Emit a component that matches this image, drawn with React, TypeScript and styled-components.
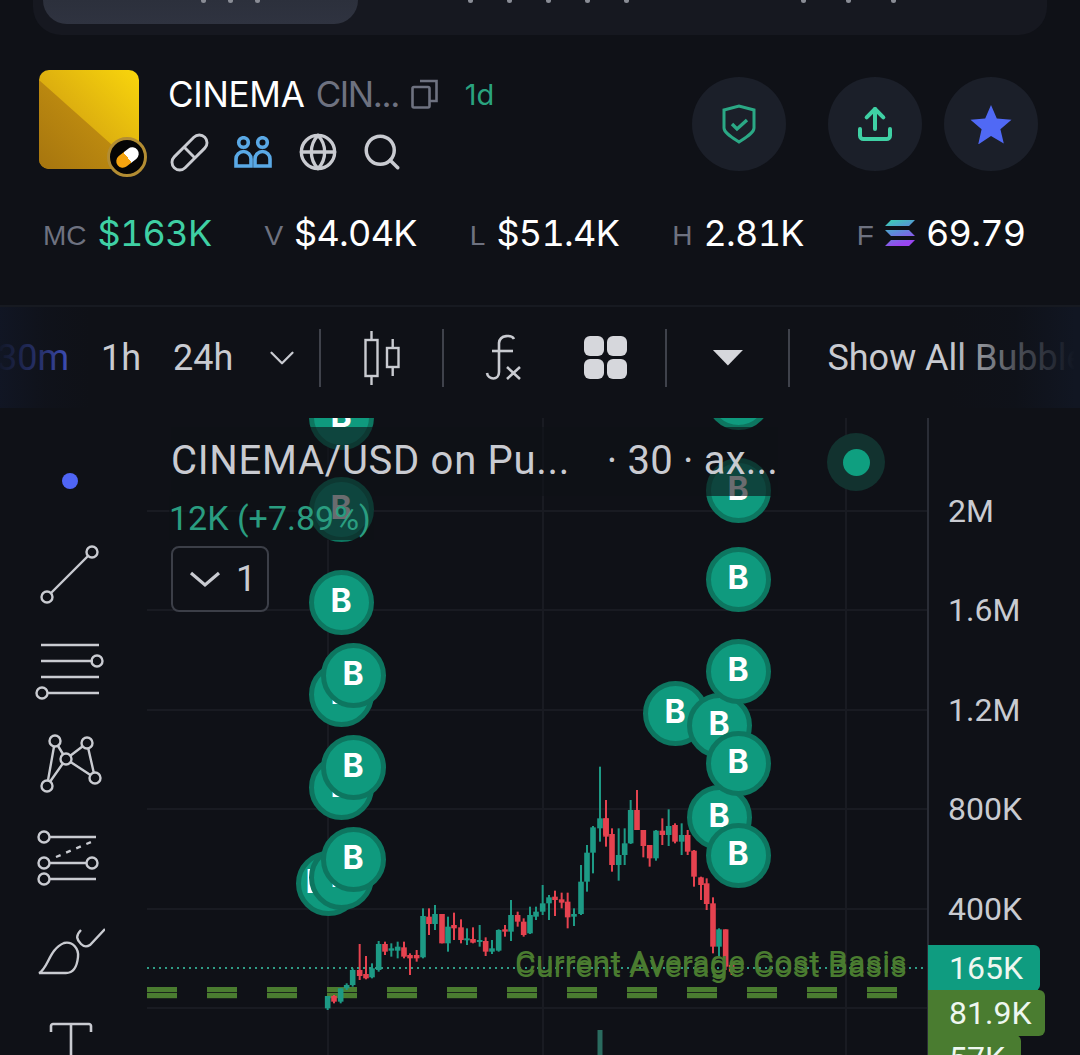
import React from 'react'
import styled, {createGlobalStyle} from 'styled-components'
import {ChevronDown, Globe, Search, Upload} from 'lucide-react'

const GlobalStyle = createGlobalStyle`
  html, body {
    margin: 0;
    padding: 0;
    background: #0f1117;
  }
  * {
    box-sizing: border-box;
  }
`

const TEAL = '#1d9a85'
const RED = '#e5424f'
const OLIVE = '#4a7c30'

// color, x, body top, body bottom, wick top, wick bottom (page pixels)
type Candle = [string, number, number, number, number, number]

const ZOOM_A: Candle[] = [
  ['g', 113, 768, 805, 768, 810], ['r', 132, 768, 785, 765, 790], ['g', 152, 745, 785, 745, 790],
  ['g', 170, 735, 745, 730, 750], ['g', 188, 690, 735, 685, 740], ['r', 209, 690, 708, 612, 720],
  ['r', 228, 702, 715, 648, 718], ['g', 246, 685, 712, 670, 715], ['g', 266, 612, 690, 603, 695],
  ['r', 285, 612, 635, 605, 645], ['g', 304, 625, 632, 610, 650], ['g', 323, 620, 632, 605, 655],
  ['r', 342, 622, 650, 605, 655], ['r', 360, 645, 655, 640, 705], ['r', 380, 645, 655, 630, 665],
  ['g', 399, 528, 652, 505, 655], ['r', 417, 530, 552, 505, 585], ['g', 435, 522, 552, 495, 570],
  ['r', 456, 522, 610, 522, 610], ['g', 474, 560, 610, 530, 635], ['r', 492, 555, 565, 518, 600],
  ['r', 513, 562, 600, 538, 610], ['g', 531, 595, 600, 565, 615], ['r', 549, 597, 608, 562, 610],
  ['g', 569, 600, 605, 555, 620], ['r', 587, 603, 635, 592, 648], ['g', 606, 625, 635, 600, 642],
  ['g', 626, 570, 632, 568, 635], ['r', 645, 568, 575, 555, 590], ['g', 663, 525, 575, 480, 603],
  ['r', 683, 525, 545, 515, 560], ['r', 701, 545, 585, 535, 590], ['g', 720, 525, 580, 500, 582],
  ['g', 738, 515, 530, 500, 540], ['g', 758, 490, 515, 435, 525], ['g', 777, 472, 490, 465, 540],
  ['r', 795, 470, 480, 452, 528], ['r', 815, 478, 488, 458, 505], ['r', 833, 485, 532, 458, 565],
  ['g', 852, 522, 530, 505, 558], ['g', 873, 425, 522, 375, 525], ['g', 891, 338, 425, 315, 455],
  ['g', 909, 262, 338, 258, 400], ['g', 930, 235, 265, 80, 305], ['r', 948, 235, 285, 182, 320]
]

const ZOOM_B: Candle[] = [
  ['r', 18, 235, 290, 180, 315], ['r', 36, 282, 375, 265, 395], ['g', 56, 345, 375, 265, 422],
  ['g', 74, 310, 345, 265, 375], ['g', 92, 210, 310, 180, 312], ['r', 111, 210, 270, 150, 270],
  ['r', 130, 270, 318, 270, 352], ['r', 149, 315, 355, 315, 380], ['g', 168, 272, 355, 270, 362],
  ['r', 187, 272, 285, 235, 315], ['g', 206, 258, 285, 208, 318], ['r', 225, 255, 305, 250, 310],
  ['g', 245, 285, 305, 250, 345], ['r', 263, 285, 335, 270, 345], ['r', 282, 332, 410, 330, 440],
  ['r', 303, 412, 435, 410, 480], ['r', 320, 430, 492, 415, 510], ['r', 339, 490, 620, 472, 640],
  ['g', 357, 568, 620, 565, 650], ['r', 377, 568, 680, 568, 690], ['r', 395, 675, 695, 670, 705]
]

const toPage = (origin: number) => ([c, x, a, b, d, e]: Candle): Candle => [
  c,
  origin + x / 3,
  740 + a / 3,
  740 + b / 3,
  740 + d / 3,
  740 + e / 3
]

const CANDLES = [...ZOOM_A.map(toPage(290)), ...ZOOM_B.map(toPage(600))]

const H_GRID = [511, 610, 710, 809, 909, 1008]
const V_GRID = [328, 543, 846]
const DASHES = Array.from({length: 13}, (_, i) => 147 + i * 60)

// x, y of each bubble and how far its letter sits off centre, drawn in this order
const BUBBLES: [number, number, number][] = [
  [341, 417, 0], [341, 509, 0], [341, 602, 0], [341, 694, 0], [353, 675, 0], [341, 787, 0], [353, 767, 0],
  [328, 883, -12], [341, 877, 0], [353, 859, 0], [738, 397, 0], [738, 490, 0], [738, 579, 0], [675, 713, 0],
  [719, 725, 0], [738, 671, 0], [719, 817, 0], [738, 763, 0], [738, 855, 0]
]

const AXIS = [
  ['2M', 511],
  ['1.6M', 610],
  ['1.2M', 710],
  ['800K', 809],
  ['400K', 909]
] as const

function ChartDrawing() {
  return (
    <ChartSvg viewBox="0 0 1080 1055">
      {H_GRID.map((y) => (
        <line key={y} x1={147} x2={928} y1={y} y2={y} stroke="#191b22" strokeWidth={2} />
      ))}
      {V_GRID.map((x) => (
        <line key={x} x1={x} x2={x} y1={418} y2={1055} stroke="#191b22" strokeWidth={2} />
      ))}
      <line x1={928} x2={928} y1={418} y2={1055} stroke="#2a2d36" strokeWidth={2} />
      {DASHES.map((x) => (
        <g key={x} fill={OLIVE}>
          <rect x={x} y={987} width={30} height={5.2} />
          <rect x={x} y={993} width={30} height={5.2} />
        </g>
      ))}
      {CANDLES.map(([c, x, a, b, d, e], i) => (
        <g key={i} fill={c === 'g' ? TEAL : RED}>
          <rect x={x - 1} y={d} width={2} height={e - d} />
          <rect x={x - 2.8} y={a} width={5.6} height={Math.max(b - a, 2)} />
        </g>
      ))}
      <rect x={597.5} y={1030} width={5} height={25} fill="#2a6b5f" />
      <line x1={147} x2={925} y1={968} y2={968} stroke="#2f9c86" strokeWidth={2} strokeDasharray="2 4" />
    </ChartSvg>
  )
}

function CopyIcon() {
  return (
    <svg width={27} height={30} viewBox="0 0 27 30" fill="none" stroke="#6e7280" strokeWidth={2.6}>
      <rect x="1.5" y="8" width="17" height="20.5" rx="1.5" />
      <path d="M9 2h16.5v20H19" />
    </svg>
  )
}

function PillIcon() {
  return (
    <Overflowing width={37} height={37} viewBox="0 0 36 36" fill="none" stroke="#c9cbd1" strokeWidth={2.8}>
      <g transform="rotate(-45 18 18)">
        <rect x="-3" y="10.5" width="42" height="15" rx="7.5" />
        <line x1="18" y1="10.5" x2="18" y2="25.5" />
      </g>
    </Overflowing>
  )
}

function UsersIcon() {
  return (
    <svg width={38} height={32} viewBox="0 0 38 32" fill="none" stroke="#5aa9e6" strokeWidth={3.6}>
      <circle cx="9.5" cy="6.5" r="4.8" />
      <circle cx="28.5" cy="6.5" r="4.8" />
      <path d="M2 30V23a7.5 7.5 0 0 1 15 0v7z" />
      <path d="M21 30V23a7.5 7.5 0 0 1 15 0v7z" />
    </svg>
  )
}

function ShieldIcon() {
  return (
    <svg width={34} height={40} viewBox="0 0 34 40" fill="none" stroke="#2ba885" strokeWidth={3}>
      <path d="M2 6 17 2l15 4v18c0 5-9 10-15 14C11 34 2 29 2 24z" />
      <path d="M10 20l5 5 10-9" strokeWidth={3.4} />
    </svg>
  )
}

function SolanaIcon() {
  return (
    <svg width={30} height={26} viewBox="0 0 30 26">
      <defs>
        <linearGradient id="sol" x1="0" y1="0" x2="0.4" y2="1">
          <stop offset="0" stopColor="#38d6b0" />
          <stop offset="0.5" stopColor="#5a8fd8" />
          <stop offset="1" stopColor="#9a45f0" />
        </linearGradient>
      </defs>
      <path fill="url(#sol)" d="M6 0h24l-6 6H0zM0 10h24l6 6H6zM6 20h24l-6 6H0z" />
    </svg>
  )
}

function CandleIcon() {
  return (
    <svg width={36} height={56} viewBox="0 0 36 56" fill="none" stroke="#c9cbd1" strokeWidth={2.4}>
      <rect x="1.5" y="10" width="12" height="36" />
      <path d="M7.5 1v9M7.5 46v9" />
      <rect x="23" y="18" width="11.5" height="19" />
      <path d="M28.7 9v9M28.7 37v9" />
    </svg>
  )
}

function FxIcon() {
  return (
    <svg width={38} height={48} viewBox="0 0 38 48" fill="none" stroke="#c9cbd1" strokeWidth={2.6}>
      <path d="M29 5C27 1 15 0 14 9v29C14 47 3 46 2 39" />
      <path d="M7 17h21" />
      <path d="M22 33l13 12M35 33 22 45" />
    </svg>
  )
}

function LineTool() {
  return (
    <svg width={70} height={70} viewBox="0 0 70 70" fill="none" stroke="#c9cbd1" strokeWidth={2.4}>
      <circle cx="12" cy="57" r="5.5" />
      <circle cx="57" cy="12" r="5.5" />
      <path d="M16 53 53 16" />
    </svg>
  )
}

function LinesTool() {
  return (
    <svg width={70} height={70} viewBox="0 0 70 70" fill="none" stroke="#c9cbd1" strokeWidth={2.4}>
      <path d="M6 11h58M6 27h52M6 43h58M13 59h51" />
      <circle cx="62" cy="27" r="5.5" />
      <circle cx="7" cy="59" r="5.5" />
    </svg>
  )
}

function PatternTool() {
  return (
    <svg width={70} height={70} viewBox="0 0 70 70" fill="none" stroke="#c9cbd1" strokeWidth={2.4}>
      <path d="M12 58 20 13M20 13 31 31M31 31 52 15M52 15 60 50M31 31 60 50M12 58 31 31" />
      <g fill="#0f1117">
        <circle cx="20" cy="13" r="5.5" />
        <circle cx="52" cy="15" r="5.5" />
        <circle cx="31" cy="31" r="5.5" />
        <circle cx="60" cy="50" r="5.5" />
        <circle cx="12" cy="58" r="5.5" />
      </g>
    </svg>
  )
}

function ChannelTool() {
  return (
    <svg width={70} height={70} viewBox="0 0 70 70" fill="none" stroke="#c9cbd1" strokeWidth={2.4}>
      <path d="M15 15h46M15 41h37M15 57h46" />
      <path d="M21 35 56 20" strokeDasharray="5 6" />
      <circle cx="9" cy="15" r="5.5" />
      <circle cx="9" cy="41" r="5.5" />
      <circle cx="57" cy="41" r="5.5" />
      <circle cx="9" cy="57" r="5.5" />
    </svg>
  )
}

function BrushTool() {
  return (
    <svg width={70} height={70} viewBox="0 0 70 70" fill="none" stroke="#c9cbd1" strokeWidth={2.4}>
      <path d="M4 57C13 53 14 33 29 27 38 25 44 33 43 41 42 51 38 57 31 57z" />
      <path d="M46 14C40 20 42 24 46 28 49 31 52 31 55 29L70 13" />
    </svg>
  )
}

function TextTool() {
  return (
    <svg width={70} height={70} viewBox="0 0 70 70" fill="none" stroke="#c9cbd1" strokeWidth={2.6}>
      <path d="M16 22v-6c0-1 1-2 2-2h36c1 0 2 1 2 2v6M36 14v56" />
    </svg>
  )
}

export default function App() {
  return (
    <Page>
      <GlobalStyle />
      <TabBar>
        <ActiveTab>
          <Marks $left={158}>
            <i />
            <i />
            <i />
          </Marks>
        </ActiveTab>
        <Marks $left={110} $gap={34}>
          <i />
          <i />
          <i />
          <i />
          <i />
        </Marks>
        <Marks $left={172} $gap={40}>
          <i />
          <i />
          <i />
        </Marks>
      </TabBar>

      <Header>
        <Logo>
          <LogoBadge>
            <BadgePill />
          </LogoBadge>
        </Logo>
        <TokenInfo>
          <NameRow>
            <TokenName>CINEMA</TokenName>
            <TokenSub>CIN...</TokenSub>
            <CopyIcon />
            <Age>1d</Age>
          </NameRow>
          <LinkRow>
            <PillIcon />
            <UsersIcon />
            <Globe size={40} color="#c9cbd1" strokeWidth={2} />
            <SearchIcon size={42} color="#c9cbd1" strokeWidth={2} />
          </LinkRow>
        </TokenInfo>
        <Actions>
          <RoundButton>
            <ShieldIcon />
          </RoundButton>
          <RoundButton $gap={42}>
            <Upload size={40} color="#3fd0a4" strokeWidth={2.4} />
          </RoundButton>
          <RoundButton $gap={22}>
            <svg width={42} height={40} viewBox="0 0 42 40">
              <path fill="#5069f5" d="M21 1l5.8 13.4 14.7 1.3-11.1 9.6 3.4 14.3L21 32.1 8.2 40.5l3.4-15.2L.5 15.7l14.7-1.300z" />
            </svg>
          </RoundButton>
        </Actions>
      </Header>

      <Stats>
        <Stat>
          <StatLabel>MC</StatLabel>
          <StatValue $green>$163K</StatValue>
        </Stat>
        <Stat>
          <StatLabel>V</StatLabel>
          <StatValue>$4.04K</StatValue>
        </Stat>
        <Stat>
          <StatLabel>L</StatLabel>
          <StatValue>$51.4K</StatValue>
        </Stat>
        <Stat>
          <StatLabel>H</StatLabel>
          <StatValue>2.81K</StatValue>
        </Stat>
        <Stat>
          <StatLabel>F</StatLabel>
          <SolanaIcon />
          <StatValue>69.79</StatValue>
        </Stat>
      </Stats>

      <Toolbar>
        <Interval $selected>30m</Interval>
        <Interval>1h</Interval>
        <Interval>24h</Interval>
        <ToolChevron>
          <ChevronDown size={42} color="#c9cbd1" strokeWidth={1.3} />
        </ToolChevron>
        <Separator $left={16} />
        <ToolSlot $width={121}>
          <CandleIcon />
        </ToolSlot>
        <Separator />
        <ToolSlot $width={120}>
          <FxIcon />
        </ToolSlot>
        <ToolSlot $width={83}>
          <GridIcon>
            <i />
            <i />
            <i />
            <i />
          </GridIcon>
        </ToolSlot>
        <Separator $left={18} />
        <ToolSlot $width={121}>
          <Caret />
        </ToolSlot>
        <Separator />
        <ShowAll>Show All Bubbles</ShowAll>
        <EdgeFade $side="left" />
        <EdgeFade $side="right" />
      </Toolbar>

      <ChartRow>
        <SideTools>
          <SideSlot>
            <BlueDot />
          </SideSlot>
          <SideSlot>
            <LineTool />
          </SideSlot>
          <SideSlot>
            <LinesTool />
          </SideSlot>
          <SideSlot>
            <PatternTool />
          </SideSlot>
          <SideSlot>
            <ChannelTool />
          </SideSlot>
          <SideSlot>
            <BrushTool />
          </SideSlot>
          <SideSlot>
            <TextTool />
          </SideSlot>
        </SideTools>

        <ChartPane>
          <ChartCanvas>
            <ChartDrawing />
            <CostLabel>Current Average Cost Basis</CostLabel>
            {BUBBLES.map(([x, y, shift], i) => (
              <Bubble key={i} style={{left: x - 32.5, top: y - 32.5}}>
                <BubbleLetter $shift={shift}>B</BubbleLetter>
              </Bubble>
            ))}
            <LegendTop>
              <span>CINEMA/USD on Pu...</span>
              <LegendMeta>· 30 · ax...</LegendMeta>
            </LegendTop>
            <LegendChange>12K (+7.89%)</LegendChange>
            <CollapseButton>
              <svg width={32} height={18} viewBox="0 0 32 18" fill="none" stroke="#c9cbd1" strokeWidth={3.2}>
                <path d="M2 3 16 15 30 3" />
              </svg>
              <span>1</span>
            </CollapseButton>
            <LiveDot />
            {AXIS.map(([text, y]) => (
              <AxisLabel key={text} style={{top: y - 20}}>
                {text}
              </AxisLabel>
            ))}
            <PriceBadge $bg="#0f9c80" $top={945} $width={112}>
              165K
            </PriceBadge>
            <PriceBadge $bg={OLIVE} $top={990} $width={117}>
              81.9K
            </PriceBadge>
            <PriceBadge $bg={OLIVE} $top={1035} $width={93}>
              57K
            </PriceBadge>
          </ChartCanvas>
        </ChartPane>
      </ChartRow>
    </Page>
  )
}

const Overflowing = styled.svg`
  overflow: visible;
`

const SearchIcon = styled(Search)`
  margin-left: -3px;
`

const Page = styled.div`
  width: 1080px;
  height: 1055px;
  overflow: hidden;
  background: #0f1117;
  color: #fff;
  font-family: Inter, 'Liberation Sans', sans-serif;
`

const TabBar = styled.div`
  display: flex;
  height: 35px;
  margin: 0 33px;
  padding: 0 10px;
  background: #161820;
  border-radius: 0 0 28px 28px;
`

const ActiveTab = styled.div`
  width: 315px;
  height: 24px;
  background: linear-gradient(180deg, #2c303c, #2f3340);
  border-radius: 0 0 26px 26px;
`

const Marks = styled.div<{$left: number; $gap?: number}>`
  display: flex;
  gap: ${(p) => p.$gap ?? 22}px;
  height: 3px;
  margin-left: ${(p) => p.$left}px;

  i {
    display: block;
    width: 5px;
    height: 3px;
    border-radius: 0 0 3px 3px;
    background: #8a8d96;
  }
`

const Header = styled.div`
  display: flex;
  align-items: flex-start;
  padding: 35px 42px 0 39px;
  height: 175px;
`

const Logo = styled.div`
  position: relative;
  flex: none;
  width: 100px;
  height: 99px;
  border-radius: 10px;
  background: linear-gradient(45deg, #c48d12 0%, #f9d60c 100%);

  &::before {
    content: '';
    position: absolute;
    inset: 0;
    border-radius: 10px;
    background: linear-gradient(225deg, #d39f10, #a6750f);
    clip-path: polygon(0 10%, 100% 100%, 0 100%);
  }
`

const LogoBadge = styled.div`
  position: absolute;
  right: -8px;
  bottom: -8px;
  width: 40px;
  height: 40px;
  display: flex;
  align-items: center;
  justify-content: center;
  border-radius: 50%;
  background: #050505;
  border: 3px solid #b38d33;
`

const BadgePill = styled.div`
  width: 13px;
  height: 25px;
  border-radius: 7px;
  transform: rotate(52deg);
  background: linear-gradient(180deg, #fff 0 50%, #f5a40f 50% 100%);
`

const TokenInfo = styled.div`
  display: flex;
  flex-direction: column;
  margin-left: 29px;
`

const NameRow = styled.div`
  display: flex;
  align-items: center;
  height: 48px;
`

const TokenName = styled.span`
  font-size: 35px;
  letter-spacing: -0.25px;
  color: #fff;
`

const TokenSub = styled.span`
  font-size: 35px;
  letter-spacing: -1.4px;
  color: #6e7280;
  margin: 0 14px 0 11px;
  width: 81px;
  white-space: nowrap;
`

const Age = styled.span`
  font-size: 29px;
  color: #2aa37f;
  margin-left: 27px;
`

const LinkRow = styled.div`
  display: flex;
  align-items: center;
  gap: 26px;
  height: 44px;
  margin-top: 12px;
  padding-left: 3px;
`

const Actions = styled.div`
  display: flex;
  margin-left: auto;
  margin-top: 7px;
`

const RoundButton = styled.div<{$gap?: number}>`
  width: 94px;
  height: 94px;
  margin-left: ${(p) => p.$gap ?? 0}px;
  border-radius: 50%;
  background: #1b1f29;
  display: flex;
  align-items: center;
  justify-content: center;
`

const Stats = styled.div`
  display: flex;
  gap: 53px;
  padding-left: 43px;
  height: 95px;
  padding-top: 1px;
`

const Stat = styled.div`
  display: flex;
  align-items: center;
  gap: 11px;
  height: 44px;
`

const StatLabel = styled.span`
  font-size: 28px;
  color: #6e7280;
  font-family: 'Liberation Sans', sans-serif;
  margin-top: 5px;
`

const StatValue = styled.span<{$green?: boolean}>`
  font-size: 36px;
  letter-spacing: -0.7px;
  font-variant-numeric: tabular-nums;
  color: ${(p) => (p.$green ? '#3fd0a4' : '#fff')};
`

const Toolbar = styled.div`
  position: relative;
  display: flex;
  align-items: center;
  height: 103px;
  overflow: hidden;
  border-top: 2px solid #171a21;
  font-family: Roboto, sans-serif;
  white-space: nowrap;
`

const Interval = styled.span<{$selected?: boolean}>`
  font-size: 36px;
  margin-right: 32px;
  margin-left: ${(p) => (p.$selected ? -3 : 0)}px;
  color: ${(p) => (p.$selected ? '#4f65f5' : '#c9cbd1')};
`

const ToolChevron = styled.span`
  display: flex;
  margin-left: -4px;
`

const Separator = styled.span<{$left?: number}>`
  flex: none;
  width: 2px;
  height: 58px;
  margin-left: ${(p) => p.$left ?? 0}px;
  background: #3f424b;
`

const ToolSlot = styled.span<{$width: number}>`
  flex: none;
  width: ${(p) => p.$width}px;
  display: flex;
  align-items: center;
  justify-content: center;
`

const GridIcon = styled.span`
  display: grid;
  grid-template-columns: 20px 20px;
  gap: 3px;

  i {
    display: block;
    height: 20px;
    border-radius: 6px;
    background: #d6d7dc;
  }
`

const Caret = styled.span`
  width: 31px;
  height: 16px;
  background: #d6d7dc;
  clip-path: polygon(0 0, 100% 0, 50% 100%);
`

const ShowAll = styled.span`
  font-size: 36px;
  margin-left: 37px;
  color: #c9cbd1;
`

const EdgeFade = styled.div<{$side: 'left' | 'right'}>`
  position: absolute;
  top: 0;
  bottom: 0;
  ${(p) => p.$side}: 0;
  width: ${(p) => (p.$side === 'left' ? 90 : 130)}px;
  background: ${(p) =>
    p.$side === 'left'
      ? 'linear-gradient(90deg, rgba(17,22,36,.97) 0%, rgba(16,19,29,.6) 50%, rgba(15,17,23,0))'
      : 'linear-gradient(270deg, rgba(17,22,34,1) 4%, rgba(15,18,26,.66) 50%, rgba(15,17,23,0))'};
`

const ChartRow = styled.div`
  display: flex;
  height: 637px;
  margin-top: 10px;
`

const SideTools = styled.div`
  flex: none;
  width: 139px;
  padding-top: 16px;
  display: flex;
  flex-direction: column;
  align-items: center;
`

const SideSlot = styled.div`
  height: 94px;
  flex: none;
  display: flex;
  align-items: center;
  justify-content: center;
`

const BlueDot = styled.span`
  width: 16px;
  height: 16px;
  border-radius: 50%;
  background: #4f65f5;
`

const ChartPane = styled.div`
  position: relative;
  flex: 1;
  overflow: hidden;
`

/* free canvas laid out in page pixels, shifted so it lines up with the pane */
const ChartCanvas = styled.div`
  position: absolute;
  left: -139px;
  top: -418px;
  width: 1080px;
  height: 1055px;
`

const ChartSvg = styled.svg`
  position: absolute;
  left: 0;
  top: 0;
  width: 1080px;
  height: 1055px;
`

const CostLabel = styled.div`
  position: absolute;
  left: 515px;
  top: 947px;
  font: 32px Roboto, sans-serif;
  letter-spacing: 0.15px;
  white-space: nowrap;
  color: ${OLIVE};
  text-shadow: 0 -4px 0 ${OLIVE};
`

const Bubble = styled.div`
  position: absolute;
  width: 65px;
  height: 65px;
  display: flex;
  align-items: center;
  justify-content: center;
  padding-bottom: 4px;
  border-radius: 50%;
  background: #0f9a7e;
  border: 5px solid #0d7660;
  color: #fff;
  font: 700 32px Inter, sans-serif;
`

const BubbleLetter = styled.span<{$shift: number}>`
  transform: translateX(${(p) => p.$shift}px);
`

const LegendTop = styled.div`
  position: absolute;
  left: 171px;
  top: 427px;
  width: 607px;
  height: 69px;
  display: flex;
  justify-content: space-between;
  align-items: center;
  background: rgba(15, 17, 23, 0.62);
  font: 40px Roboto, sans-serif;
  letter-spacing: 0.7px;
  color: #c9cbd1;
  white-space: nowrap;
  padding-bottom: 2px;
`

const LegendMeta = styled.span`
  letter-spacing: 0.2px;
`

const LegendChange = styled.div`
  position: absolute;
  left: 169px;
  top: 496px;
  width: 205px;
  height: 44px;
  display: flex;
  align-items: center;
  background: rgba(15, 17, 23, 0.62);
  font: 34px Roboto, sans-serif;
  color: #2a9d80;
  white-space: nowrap;
`

const CollapseButton = styled.div`
  position: absolute;
  left: 171px;
  top: 546px;
  width: 98px;
  height: 66px;
  display: flex;
  align-items: center;
  gap: 15px;
  padding-left: 16px;
  border: 2px solid #3c3f48;
  border-radius: 8px;
  background: #0f1117;
  font: 36px Roboto, sans-serif;
  color: #c9cbd1;
`

const LiveDot = styled.div`
  position: absolute;
  left: 827px;
  top: 433px;
  width: 58px;
  height: 58px;
  border-radius: 50%;
  background: #12322f;

  &::after {
    content: '';
    position: absolute;
    inset: 15.5px;
    border-radius: 50%;
    background: #0f9f80;
  }
`

const AxisLabel = styled.div`
  position: absolute;
  left: 948px;
  font: 32px/40px Roboto, sans-serif;
  color: #c9cbd1;
`

const PriceBadge = styled.div<{$bg: string; $top: number; $width: number}>`
  position: absolute;
  left: 928px;
  top: ${(p) => p.$top}px;
  width: ${(p) => p.$width}px;
  height: 46px;
  padding-left: 21px;
  border-radius: 0 6px 6px 0;
  background: ${(p) => p.$bg};
  color: #eef7f0;
  font: 32px/46px Roboto, sans-serif;
`
